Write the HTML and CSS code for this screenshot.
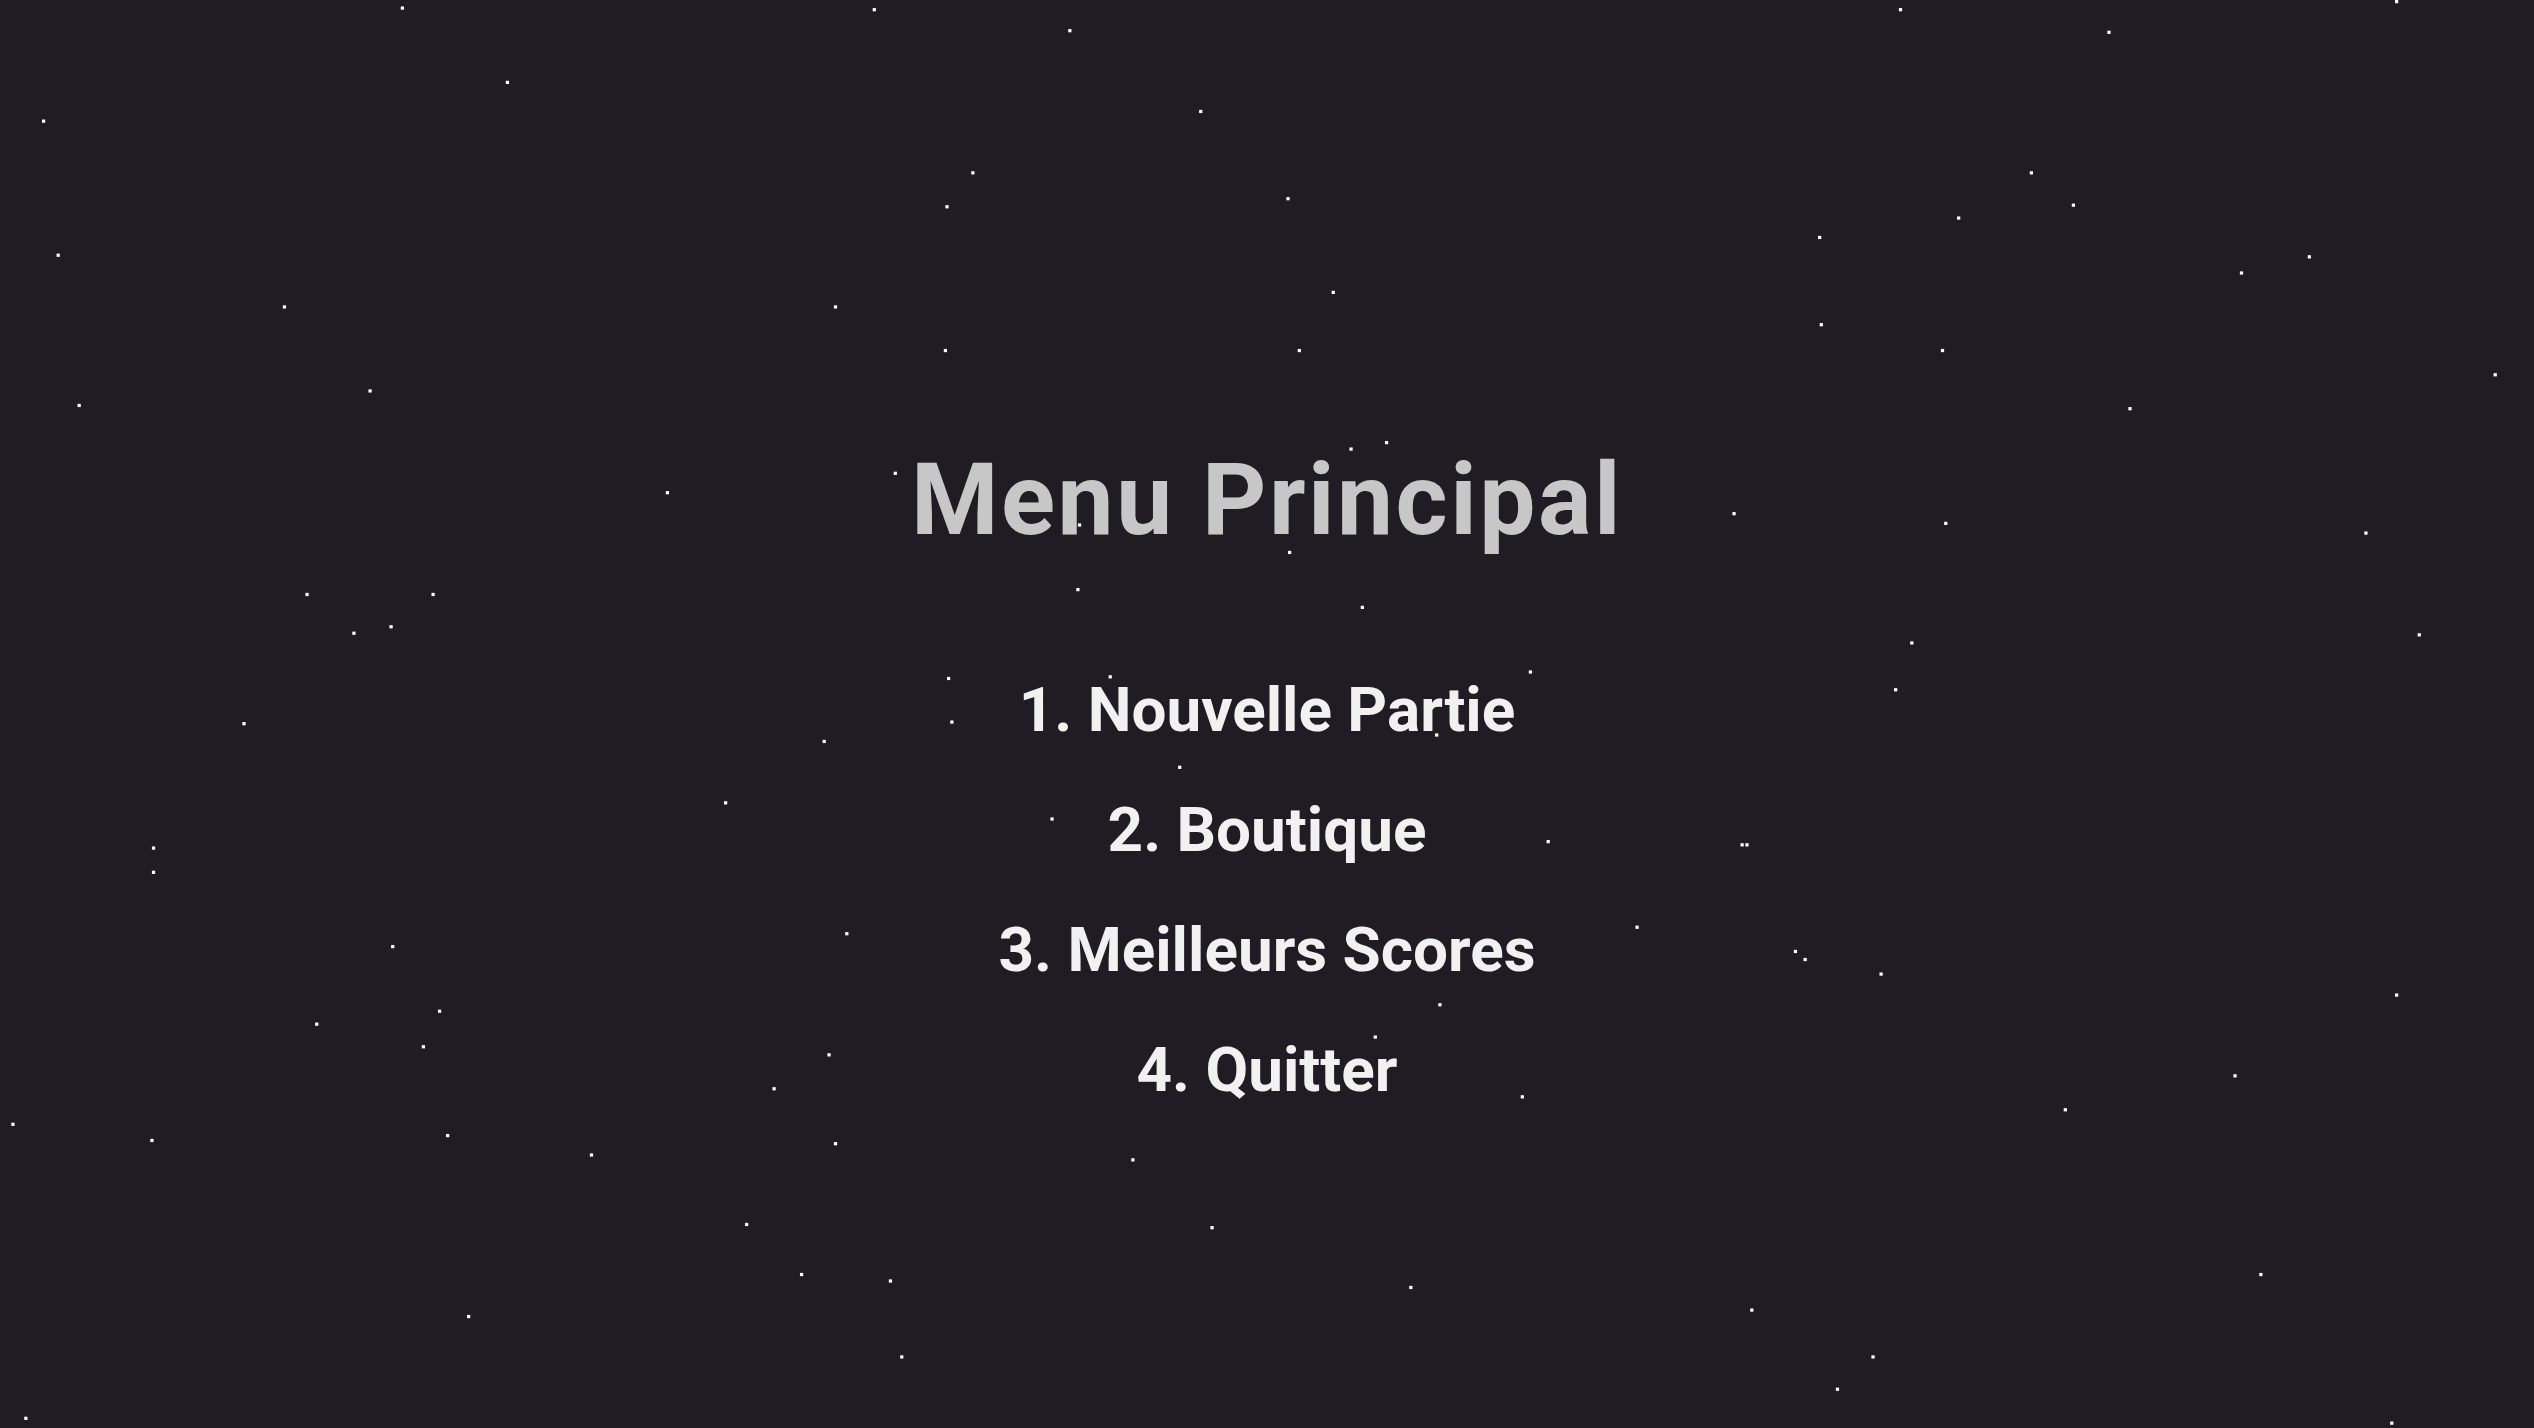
FILE: index.html
```html
<!DOCTYPE html>
<html lang="fr">
<head>
  <meta charset="UTF-8">
  <meta name="viewport" content="width=device-width, initial-scale=1.0">
  <title>Menu Principal</title>
  <link rel="stylesheet" href="styles.css">
</head>
<body>
  <svg class="starfield" viewBox="0 0 1568 884" preserveAspectRatio="none" aria-hidden="true">
    <g fill="#ffffff">
      <rect x="248" y="4" width="2" height="2"/><rect x="540" y="5" width="2" height="2"/>
      <rect x="661" y="18" width="2" height="2"/><rect x="1175" y="5" width="2" height="2"/>
      <rect x="1304" y="19" width="2" height="2"/><rect x="1482" y="0" width="2" height="2"/>
      <rect x="313" y="50" width="2" height="2"/><rect x="26" y="74" width="2" height="2"/>
      <rect x="742" y="68" width="2" height="2"/><rect x="601" y="106" width="2" height="2"/>
      <rect x="585" y="127" width="2" height="2"/><rect x="796" y="122" width="2" height="2"/>
      <rect x="1256" y="106" width="2" height="2"/><rect x="1282" y="126" width="2" height="2"/>
      <rect x="1211" y="134" width="2" height="2"/><rect x="1125" y="146" width="2" height="2"/>
      <rect x="35" y="157" width="2" height="2"/><rect x="1386" y="168" width="2" height="2"/>
      <rect x="1428" y="158" width="2" height="2"/><rect x="175" y="189" width="2" height="2"/>
      <rect x="516" y="189" width="2" height="2"/><rect x="824" y="180" width="2" height="2"/>
      <rect x="1126" y="200" width="2" height="2"/><rect x="584" y="216" width="2" height="2"/>
      <rect x="803" y="216" width="2" height="2"/><rect x="1201" y="216" width="2" height="2"/>
      <rect x="228" y="241" width="2" height="2"/><rect x="48" y="250" width="2" height="2"/>
      <rect x="1543" y="231" width="2" height="2"/><rect x="1317" y="252" width="2" height="2"/>
      <rect x="553" y="292" width="2" height="2"/><rect x="835" y="277" width="2" height="2"/>
      <rect x="857" y="273" width="2" height="2"/><rect x="412" y="304" width="2" height="2"/>
      <rect x="1072" y="317" width="2" height="2"/><rect x="1203" y="323" width="2" height="2"/>
      <rect x="1463" y="329" width="2" height="2"/><rect x="797" y="341" width="2" height="2"/>
      <rect x="666" y="364" width="2" height="2"/><rect x="842" y="375" width="2" height="2"/>
      <rect x="189" y="367" width="2" height="2"/><rect x="267" y="367" width="2" height="2"/>
      <rect x="218" y="391" width="2" height="2"/><rect x="241" y="387" width="2" height="2"/>
      <rect x="1496" y="392" width="2" height="2"/><rect x="1182" y="397" width="2" height="2"/>
      <rect x="586" y="419" width="2" height="2"/>
      <rect x="946" y="415" width="2" height="2"/><rect x="1172" y="426" width="2" height="2"/>
      <rect x="150" y="447" width="2" height="2"/><rect x="588" y="446" width="2" height="2"/>
      <rect x="509" y="458" width="2" height="2"/><rect x="729" y="474" width="2" height="2"/>
      <rect x="448" y="496" width="2" height="2"/><rect x="94" y="524" width="2" height="2"/>
      <rect x="94" y="539" width="2" height="2"/><rect x="650" y="506" width="2" height="2"/>
      <rect x="957" y="520" width="2" height="2"/><rect x="1077" y="522" width="2" height="2"/>
      <rect x="1080" y="522" width="2" height="2"/><rect x="523" y="577" width="2" height="2"/>
      <rect x="1012" y="573" width="2" height="2"/><rect x="1110" y="588" width="2" height="2"/>
      <rect x="1116" y="593" width="2" height="2"/><rect x="1163" y="602" width="2" height="2"/>
      <rect x="242" y="585" width="2" height="2"/><rect x="271" y="625" width="2" height="2"/>
      <rect x="195" y="633" width="2" height="2"/><rect x="261" y="647" width="2" height="2"/>
      <rect x="890" y="621" width="2" height="2"/><rect x="850" y="641" width="2" height="2"/>
      <rect x="512" y="652" width="2" height="2"/><rect x="1482" y="615" width="2" height="2"/>
      <rect x="1382" y="665" width="2" height="2"/><rect x="478" y="673" width="2" height="2"/>
      <rect x="941" y="678" width="2" height="2"/><rect x="7" y="695" width="2" height="2"/>
      <rect x="93" y="705" width="2" height="2"/><rect x="276" y="702" width="2" height="2"/>
      <rect x="516" y="707" width="2" height="2"/><rect x="365" y="714" width="2" height="2"/>
      <rect x="700" y="717" width="2" height="2"/><rect x="1277" y="686" width="2" height="2"/>
      <rect x="461" y="757" width="2" height="2"/><rect x="749" y="759" width="2" height="2"/>
      <rect x="495" y="788" width="2" height="2"/><rect x="550" y="792" width="2" height="2"/>
      <rect x="872" y="796" width="2" height="2"/><rect x="1398" y="788" width="2" height="2"/>
      <rect x="289" y="814" width="2" height="2"/><rect x="1083" y="810" width="2" height="2"/>
      <rect x="557" y="839" width="2" height="2"/><rect x="1158" y="839" width="2" height="2"/>
      <rect x="1136" y="859" width="2" height="2"/><rect x="15" y="877" width="2" height="2"/>
      <rect x="1479" y="880" width="2" height="2"/>
    </g>
  </svg>

  <main class="menu">
    <h1 class="menu-title">Menu Principal</h1>
    <ul class="menu-list">
      <li class="menu-item">1. Nouvelle Partie</li>
      <li class="menu-item">2. Boutique</li>
      <li class="menu-item">3. Meilleurs Scores</li>
      <li class="menu-item">4. Quitter</li>
    </ul>
  </main>

  <svg class="starfield starfield-front" viewBox="0 0 1568 884" preserveAspectRatio="none" aria-hidden="true">
    <g fill="#ffffff">
      <rect x="667" y="324" width="2" height="2"/><rect x="888" y="454" width="2" height="2"/>
      <rect x="686" y="418" width="2" height="2"/><rect x="869" y="441" width="2" height="2"/>
    </g>
  </svg>
</body>
</html>
```

FILE: styles.css
```css
html, body {
  height: 100%;
}
body {
  margin: 0;
  background: #1f1d23;
  font-family: Roboto, 'Noto Sans', sans-serif;
  overflow: hidden;
  position: relative;
}
.starfield {
  position: absolute;
  top: 0;
  left: 0;
  width: 100%;
  height: 100%;
}
.starfield-front {
  pointer-events: none;
}
.menu {
  position: relative;
  display: flex;
  flex-direction: column;
  align-items: center;
  padding-top: 440px;
}
.menu-title {
  margin: 0;
  font-size: 100px;
  font-weight: 700;
  line-height: 120px;
  letter-spacing: 2.5px;
  color: #c7c7c7;
}
.menu-list {
  list-style: none;
  margin: 110px 0 0 0;
  padding: 0;
  display: flex;
  flex-direction: column;
  align-items: center;
  gap: 40px;
}
.menu-item {
  font-size: 62px;
  font-weight: 700;
  line-height: 80px;
  color: #f1f1f1;
}
```
